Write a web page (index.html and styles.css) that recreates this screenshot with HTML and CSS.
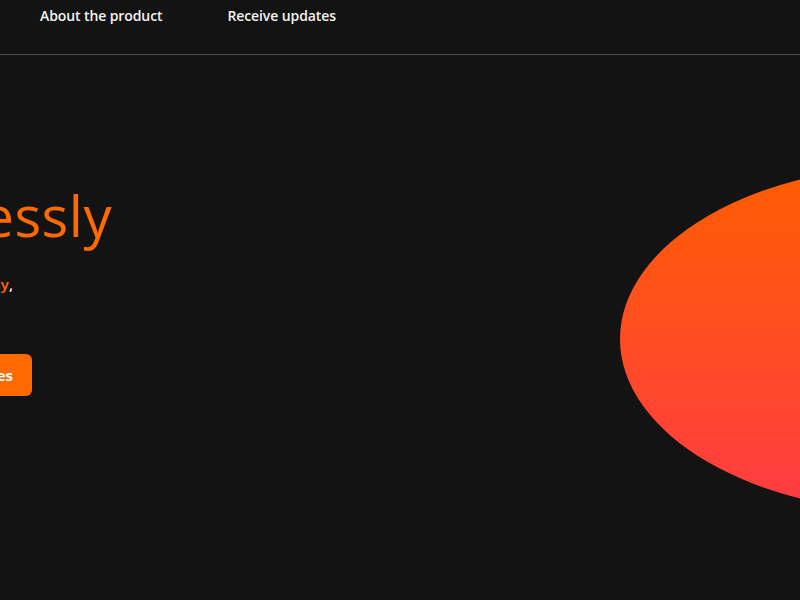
FILE: index.html
```html
<!DOCTYPE html>
<html lang="en">
<head>
<meta charset="utf-8">
<title>Landing</title>
<link rel="stylesheet" href="styles.css">
</head>
<body>
<header class="nav">
  <nav class="nav-links">
    <a class="nav-link" href="#about">About the product</a>
    <a class="nav-link" href="#updates">Receive updates</a>
  </nav>
</header>
<main class="hero">
  <div class="hero-text">
    <h1 class="hero-title">Build effortlessly</h1>
    <p class="hero-sub">A simple platform made for <span class="accent">everybody</span>,</p>
    <a class="btn" href="#updates">Receive updates</a>
  </div>
  <div class="blob"></div>
</main>
</body>
</html>
```
FILE: styles.css
```css
* { box-sizing: border-box; }
html, body {
  margin: 0;
  height: 100%;
}
body {
  background: #131313;
  color: #f2f2f2;
  font-family: "Open Sans", "Noto Sans", sans-serif;
  overflow: hidden;
}
.nav {
  height: 55px;
  border-bottom: 1px solid #4d4d4d;
  padding: 5px 0 0 40px;
}
.nav-links {
  display: flex;
  gap: 65px;
}
.nav-link {
  color: #f2f2f2;
  text-decoration: none;
  font-size: 14px;
  font-weight: 600;
  line-height: 22px;
  letter-spacing: -0.1px;
}
.hero {
  display: flex;
  align-items: flex-start;
}
.hero-text {
  flex: none;
  width: 112px;
  display: flex;
  flex-direction: column;
  align-items: flex-end;
  padding-top: 125px;
}
.hero-title {
  margin: 0;
  white-space: nowrap;
  font-size: 56px;
  font-weight: 400;
  line-height: 70px;
  color: #ff6a00;
  letter-spacing: 0.5px;
}
.hero-sub {
  margin: 22px 99px 0 0;
  white-space: nowrap;
  font-size: 15px;
  font-weight: 600;
  line-height: 24px;
  color: #f2f2f2;
}
.accent { color: #ff6a00; }
.btn {
  margin: 58px 80px 0 0;
  white-space: nowrap;
  display: flex;
  align-items: center;
  height: 42px;
  padding: 0 19px;
  border-radius: 6px;
  background: #ff6a00;
  color: #ffffff;
  text-decoration: none;
  font-size: 15px;
  font-weight: 700;
}
.blob {
  flex: none;
  width: 600px;
  height: 348px;
  margin: 110px 0 0 508px;
  border-radius: 50%;
  background: linear-gradient(180deg, #ff5d00 0%, #ff4d22 50%, #ff3a45 100%);
}
```
